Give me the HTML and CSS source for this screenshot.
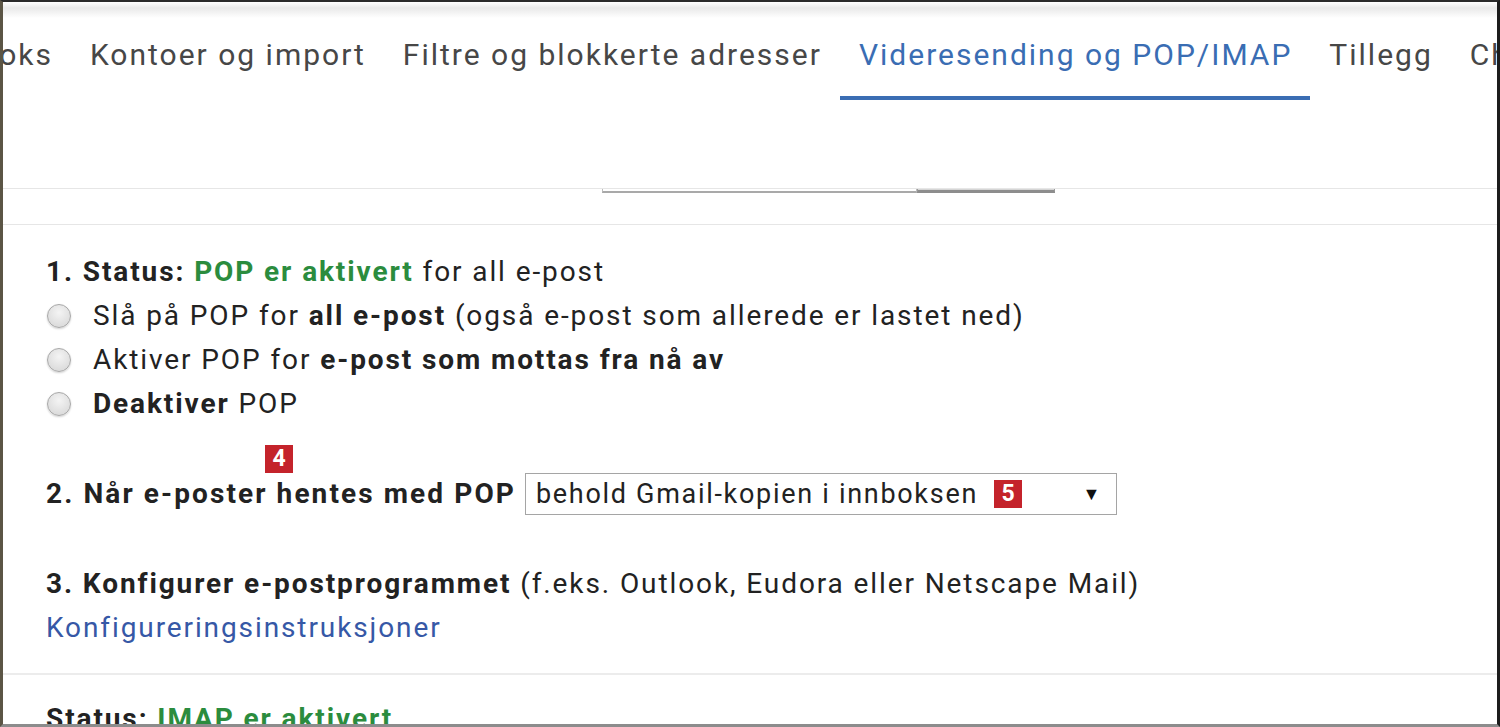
FILE: index.html
```html
<!DOCTYPE html>
<html lang="nb">
<head>
  <meta charset="UTF-8" />
  <title>Innstillinger - Videresending og POP/IMAP</title>
  <link rel="stylesheet" href="styles.css">
</head>
<body>
  <div class="frame">
    <div class="tabs">
      <a class="tab first">Innboks</a>
      <a class="tab">Kontoer og import</a>
      <a class="tab">Filtre og blokkerte adresser</a>
      <a class="tab active">Videresending og POP/IMAP</a>
      <a class="tab">Tillegg</a>
      <a class="tab">Chat</a>
    </div>
    <div class="toolbar">
      <div class="search-edge">
        <span class="search-input"></span>
        <span class="search-btn"></span>
      </div>
    </div>
    <div class="settings">
      <div class="row">
        <b>1. Status:</b> <span class="ok">POP er aktivert</span> for all e-post
      </div>
      <label class="row option"><span class="radio"></span><span>Slå på POP for <b>all e-post</b> (også e-post som allerede er lastet ned)</span></label>
      <label class="row option"><span class="radio"></span><span>Aktiver POP for <b>e-post som mottas fra nå av</b></span></label>
      <label class="row option"><span class="radio"></span><span><b>Deaktiver</b> POP</span></label>

      <div class="row step2">
        <b class="marked">2. Når e-poster hentes med POP<span class="badge badge-top">4</span></b>
        <div class="select">
          <span>behold Gmail-kopien i innboksen</span>
          <span class="badge">5</span>
          <span class="arrow">▼</span>
        </div>
      </div>

      <div class="row step3">
        <b>3. Konfigurer e-postprogrammet</b> (f.eks. Outlook, Eudora eller Netscape Mail)
      </div>
      <div class="row"><a class="link">Konfigureringsinstruksjoner</a></div>
    </div>
    <div class="settings imap">
      <div class="row"><b>Status:</b> <span class="ok">IMAP er aktivert</span></div>
    </div>
  </div>
</body>
</html>
```
FILE: styles.css
```css
body {
  margin: 0;
  font-family: Roboto, "Liberation Sans", sans-serif;
  color: #222;
  background: #fff;
}
.frame {
  width: 1500px;
  height: 727px;
  box-sizing: border-box;
  border-top: 2px solid #2a2a2a;
  border-left: 3px solid #5b5545;
  border-right: 3px solid #1c1c1c;
  border-bottom: 3px solid #8c8c8c;
  overflow: hidden;
  background: linear-gradient(#fff 0, #e9e9e9 6px, #fff 16px, #fff 100%);
}
.tabs {
  display: flex;
  white-space: nowrap;
  margin-left: -89px;
}
.tab {
  font-size: 30px;
  letter-spacing: 2px;
  line-height: 40px;
  padding: 33px 18px 21px 19px;
  border-bottom: 4px solid transparent;
  color: #474747;
}
.tab.active {
  color: #3a6db3;
  border-bottom-color: #3a6db3;
}
.toolbar {
  margin-top: 88px;
  height: 35px;
  border-top: 1px solid #e6e6e6;
  border-bottom: 1px solid #e6e6e6;
}
.search-edge {
  display: flex;
  margin-left: 599px;
  width: 453px;
  height: 4px;
}
.search-input {
  flex: 1;
  border: 1px solid #bdbdbd;
  border-top: none;
  border-bottom: 2px solid #a9a9a9;
}
.search-btn {
  width: 136px;
  border: 1px solid #9a9a9a;
  border-top: none;
  border-bottom: 3px solid #8d8d8d;
  background: #d6d6d6;
}
.settings {
  padding: 25px 0 0 43px;
  font-size: 28px;
  letter-spacing: 1.9px;
}
.row {
  line-height: 44px;
}
.option {
  display: flex;
  align-items: center;
}
.radio {
  flex: none;
  width: 24px;
  height: 24px;
  border-radius: 50%;
  box-sizing: border-box;
  border: 1px solid #a8a8a8;
  background: radial-gradient(circle at 50% 35%, #f4f4f4, #d4d4d4);
  box-shadow: 0 1px 2px rgba(0, 0, 0, 0.18);
  margin: 0 22px 0 1px;
}
.ok {
  color: #2b8c3e;
  font-weight: 700;
}
.step2 {
  display: flex;
  align-items: center;
  margin-top: 46px;
}
.marked {
  position: relative;
  letter-spacing: 2.1px;
}
.badge {
  display: inline-block;
  width: 28px;
  height: 28px;
  line-height: 28px;
  text-align: center;
  background: #c4232b;
  color: #fff;
  font-weight: 700;
  font-size: 23px;
  letter-spacing: 0;
}
.badge-top {
  position: absolute;
  left: 219px;
  top: -27px;
}
.select {
  display: flex;
  align-items: center;
  margin-left: 9px;
  width: 592px;
  height: 42px;
  box-sizing: border-box;
  border: 1px solid #a5a5a5;
  padding: 0 14px 0 10px;
  font-size: 27px;
  letter-spacing: 1.7px;
}
.select .badge {
  margin-left: 16px;
}
.arrow {
  margin-left: auto;
  font-size: 18px;
  color: #111;
}
.step3 {
  margin-top: 46px;
}
.link {
  color: #3658a6;
}
.imap {
  margin-top: 23px;
  border-top: 2px solid #ececec;
  padding-top: 22px;
}
```
